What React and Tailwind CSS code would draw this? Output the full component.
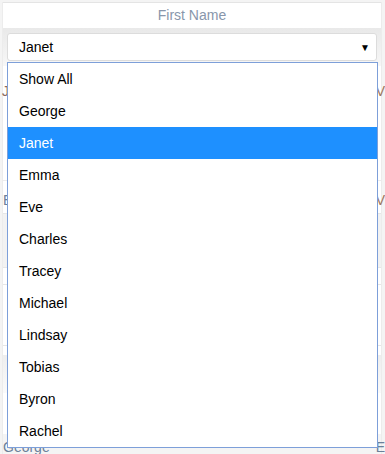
export default function App() {
  const items = ["Show All","George","Janet","Emma","Eve","Charles","Tracey","Michael","Lindsay","Tobias","Byron","Rachel"];
  return (
    <div className="relative w-[385px] h-[454px] overflow-hidden bg-[#f4f4f4] text-[14px]" style={{fontFamily: '"Liberation Sans", Arial, sans-serif'}}>
      <div className="h-[2px] bg-[#f4f4f4]" />
      <div className="ml-[2px] mr-[3px] border-l border-r border-[#ececec] bg-white">
        <div className="h-[26px] border-t border-[#e4e4e4] flex items-center justify-center text-[#8896ab]">First Name</div>
        <div className="h-[38px] bg-gradient-to-b from-[#e9e9e9] to-[#f7f7f7] px-[4px] pt-[5px]">
          <div className="h-[28px] rounded-[3px] border border-[#dcdcdc] bg-white flex items-center justify-between pl-[11px] pr-[6px] text-black">
            <span>Janet</span>
            <span className="text-[10px]">▼</span>
          </div>
        </div>
        <div className="h-[114px] flex items-start justify-between pt-[15px] text-[#8a6a60]">
          <span className="-ml-[1px]">J</span><span className="mr-[-4px] text-[#a07860]">V</span>
        </div>
        <div className="h-[33px] border-t border-[#ececec] flex items-start justify-between pt-[9px] text-[#6b7f99]">
          <span>E</span><span className="mr-[-4px] text-[#a07860]">V</span>
        </div>
        <div className="h-[54px] bg-[#f2f2f2] border-t border-[#e6e6e6]" />
        <div className="h-[17px] border-t border-[#e6e6e6]" />
        <div className="h-[61px] border-t border-[#e6e6e6]" />
        <div className="h-[10px] border-t border-[#e6e6e6]" />
        <div className="h-[38px] bg-gradient-to-b from-[#eeeeee] to-[#fafafa]" />
        <div className="h-[41px] bg-white" />
        <div className="h-[20px] bg-[#f4f4f4] flex items-start justify-between pt-[3px] text-[#6b7f99]">
          <span>George</span><span className="mr-[-4px]">E</span>
        </div>
      </div>
      <div className="absolute left-[7px] top-[62px] w-[371px] border border-[#7d9fd9] bg-white">
        {items.map((it) => (
          <div key={it} className={"h-[32px] flex items-center pl-[11px] " + (it === "Janet" ? "bg-[#1e90ff] text-white" : "text-black")}>{it}</div>
        ))}
      </div>
    </div>
  );
}
